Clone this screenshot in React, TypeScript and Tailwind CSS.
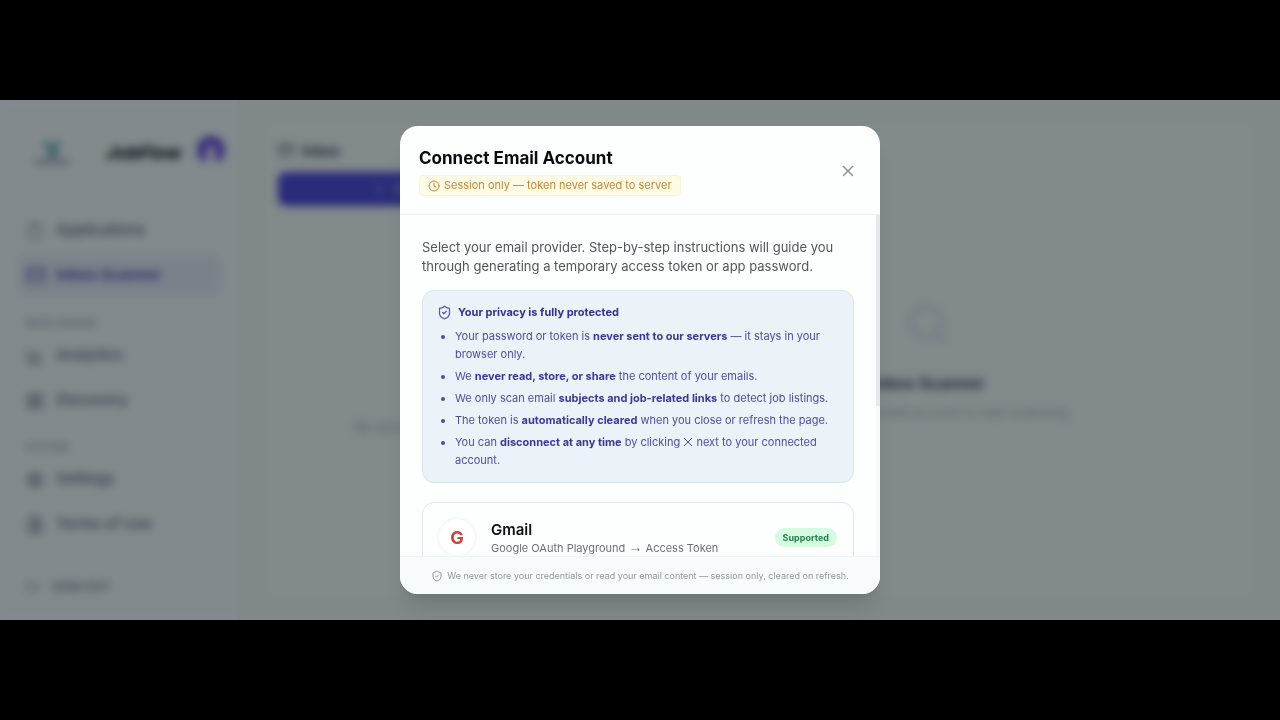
import React from "react";
import {
  BarChart3,
  Clipboard,
  Clock,
  FileText,
  LayoutGrid,
  LogOut,
  Mail,
  Plus,
  Search,
  Settings,
  ShieldCheck,
  X,
} from "lucide-react";

const navItem = "flex items-center gap-3 h-[33px] px-2 rounded-lg text-[15px] font-medium text-[#5f7284]";
const navLabel = "px-2 text-[10px] leading-4 font-semibold uppercase text-[#9fadbd]";

function Sidebar() {
  return (
    <aside className="w-[240px] shrink-0 flex flex-col px-[18px] pt-8 pb-6 border-r border-[#dfe9f2]">
      <div className="flex items-center h-10 -mr-2">
        <div className="w-[68px] flex flex-col items-center">
          <svg width="22" height="20" viewBox="0 0 22 20" fill="none">
            <path d="M3 2l8 7 8-7M11 9l-4 9M11 9l6 9" stroke="#5aa3aa" strokeWidth="4" />
          </svg>
          <span className="w-9 h-1 bg-[#9aa9b8]" />
        </div>
        <span className="ml-5 text-[18px] font-extrabold italic text-[#1b2733]">JobFlow</span>
        <svg className="ml-auto mr-1 -mt-1" width="28" height="28" viewBox="0 0 28 28">
          <circle cx="14" cy="14" r="14" fill="#6655e0" />
          <circle cx="14" cy="15" r="5" fill="#e6f0ff" />
          <path d="M8 28c0-7 2-9 6-9s6 2 6 9z" fill="#e6f0ff" />
        </svg>
      </div>

      <nav className="mt-[42px] flex flex-col">
        <a href="#applications" className={navItem}>
          <Clipboard size={18} className="text-[#8a9aab]" /> Applications
        </a>
        <a href="#inbox" className="mt-2 flex items-center gap-[10px] h-10 px-2 rounded-lg text-[15px] font-bold text-[#5d5fc0] bg-[#dfecfb]">
          <Mail size={20} /> Inbox Scanner
        </a>
        <p className={`${navLabel} mt-5`}>Intelligence</p>
        <a href="#analytics" className={`${navItem} mt-2`}>
          <BarChart3 size={18} /> Analytics
        </a>
        <a href="#discovery" className={`${navItem} mt-3`}>
          <LayoutGrid size={18} /> Discovery
        </a>
        <p className={`${navLabel} mt-[22px]`}>System</p>
        <a href="#settings" className={`${navItem} mt-2`}>
          <Settings size={18} /> Settings
        </a>
        <a href="#terms" className={`${navItem} mt-3`}>
          <FileText size={18} /> Terms of Use
        </a>
      </nav>

      <button className="mt-auto flex items-center gap-3 px-2 text-[12px] font-semibold text-[#7d8e9f]">
        <LogOut size={14} /> SIGN OUT
      </button>
    </aside>
  );
}

function InboxPage() {
  return (
    <div className="h-full flex bg-[#ecfaff]">
      <Sidebar />
      <main className="flex-1 flex gap-3 px-[26px] py-6 bg-[#eaf8fc]">
        <section className="w-[324px] shrink-0 flex flex-col p-3 rounded-xl bg-[#ebf9fd]">
          <h2 className="flex items-center gap-2 h-7 text-[14px] font-bold text-[#465868]">
            <Mail size={16} /> Inbox
          </h2>
          <button className="mt-2 h-[34px] shrink-0 flex items-center justify-center gap-2 rounded-lg bg-[#4b50dc] text-[#b9bdf5] text-[13px] font-semibold">
            <Plus size={14} /> Connect Email
          </button>
          <p className="mt-[212px] text-center text-[13px] text-[#9fb4c4]">No accounts connected</p>
        </section>
        <section className="flex-1 flex flex-col items-center pt-[177px] rounded-xl bg-[#ebf9fd]">
          <Search size={46} strokeWidth={2} className="text-[#d8e2f2]" />
          <h3 className="mt-6 text-[16px] font-bold text-[#465868]">Inbox Scanner</h3>
          <p className="mt-2 text-[13px] text-[#b3c1cc]">Connect your email account to start scanning</p>
        </section>
      </main>
    </div>
  );
}

function PrivacyNotice() {
  return (
    <div className="rounded-xl border border-[#dbe5ec] bg-[#ebf2f8] px-[14px] pt-3 pb-[13px]">
      <h3 className="flex items-center gap-[6px] text-[11px] leading-[18px] font-bold text-[#37308f]">
        <ShieldCheck size={15} className="text-[#5a58a8]" />
        Your privacy is fully protected
      </h3>
      <ul className="mt-[6px] pl-[18px] list-disc space-y-1 text-[11px] leading-[18px] text-[#514ba0] [&_strong]:font-bold [&_strong]:text-[#3f3698]">
        <li>
          Your password or token is <strong>never sent to our servers</strong> — it stays in your browser only.
        </li>
        <li>
          We <strong>never read, store, or share</strong> the content of your emails.
        </li>
        <li>
          We only scan email <strong>subjects and job-related links</strong> to detect job listings.
        </li>
        <li>
          The token is <strong>automatically cleared</strong> when you close or refresh the page.
        </li>
        <li>
          You can <strong>disconnect at any time</strong> by clicking{" "}
          <svg className="inline align-[-1px]" width="10" height="10" viewBox="0 0 10 10" stroke="currentColor" aria-label="X">
            <path d="M1 1l8 8M9 1L1 9" />
          </svg>{" "}
          next to your connected account.
        </li>
      </ul>
    </div>
  );
}

function ConnectEmailModal() {
  return (
    <div role="dialog" aria-labelledby="connect-title" className="w-full max-w-[480px] max-h-[90%] flex flex-col overflow-hidden rounded-[18px] bg-[#fdfffe] shadow-xl">
      <header className="shrink-0 flex items-center justify-between pl-[19px] pr-[22px] pt-5 pb-[18px] border-b border-[#eef2f3]">
        <div>
          <h2 id="connect-title" className="text-[17px] leading-6 font-bold text-[#0a0a0f]">
            Connect Email Account
          </h2>
          <p className="mt-[5px] w-fit flex items-center gap-1 px-2 rounded border border-[#f8f5d2] bg-[#fdfbe6] text-[11px] leading-[19px] text-[#c48736]">
            <Clock size={12} />
            Session only — token never saved to server
          </p>
        </div>
        <button aria-label="Close" className="p-[1px] text-[#8b9296]">
          <X size={18} strokeWidth={2} />
        </button>
      </header>

      <div className="min-h-0 flex-1 flex">
        <div className="flex-1 overflow-hidden px-[22px] pt-[23px]">
          <p className="text-[13px] leading-[19px] text-[#4f5759]">
            Select your email provider. Step-by-step instructions will guide you through generating a temporary access token or app password.
          </p>
          <div className="mt-[14px]">
            <PrivacyNotice />
          </div>
          <button className="mt-[19px] w-full flex items-center gap-4 px-4 pt-[14px] pb-3 rounded-xl border border-[#e1e7ec] text-left">
            <span className="size-9 shrink-0 flex items-center justify-center rounded-full bg-white shadow-[0_0_4px_rgba(0,0,0,0.08)] text-[18px] font-bold text-[#c9473d]">
              G
            </span>
            <span className="flex-1 pt-1">
              <span className="block text-[15px] leading-[18px] font-semibold text-[#0f1115]">Gmail</span>
              <span className="block text-[11px] leading-[18px] text-[#6a7275]">
                Google OAuth Playground <span className="font-['Liberation_Sans',sans-serif] text-[14px] leading-none">→</span> Access Token
              </span>
            </span>
            <span className="rounded-full bg-[#d6fbe2] px-2 text-[9px] leading-[19px] font-bold text-[#21804a]">Supported</span>
          </button>
        </div>
        <div className="w-1 shrink-0 bg-[#f6fafa]">
          <div className="h-[56%] bg-[#e3e9ec]" />
        </div>
      </div>

      <footer className="shrink-0 flex items-center justify-center gap-1 h-[38px] border-t border-[#eff3f4] bg-[#f7fbfc] text-[9px] text-[#8f989d]">
        <ShieldCheck size={12} />
        We never store your credentials or read your email content — session only, cleared on refresh.
      </footer>
    </div>
  );
}

export default function App() {
  return (
    <div className="h-screen bg-black py-[100px] font-['Inter',sans-serif]">
      <div className="relative h-full overflow-hidden">
        <InboxPage />
        <div className="absolute inset-0 flex items-center justify-center bg-black/45 backdrop-blur-[4px]">
          <ConnectEmailModal />
        </div>
      </div>
    </div>
  );
}
